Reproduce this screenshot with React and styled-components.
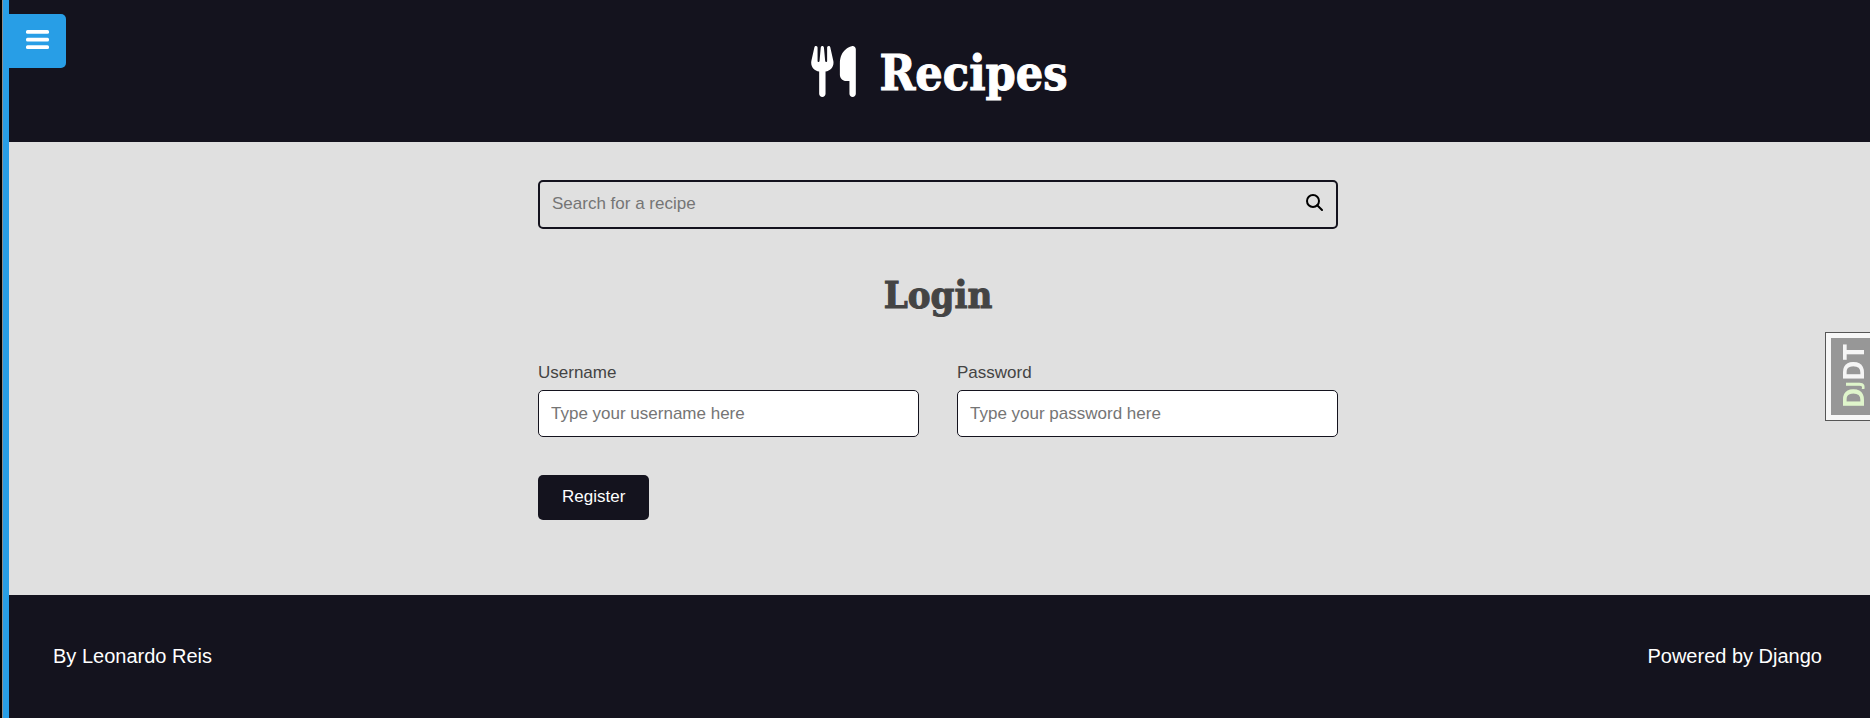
import React from "react";
import styled, { createGlobalStyle } from "styled-components";
import { FaUtensils } from "react-icons/fa6";

const ink = "#14131e";
const blue = "#289ee6";
const slab = '"Roboto Slab", "DejaVu Serif Condensed", "DejaVu Serif", serif';

const GlobalStyle = createGlobalStyle`
  *, *::before, *::after { box-sizing: border-box; }
  body {
    margin: 0;
    background: #e0e0e0;
    color: #444;
    font-family: "Liberation Sans", Arial, sans-serif;
    font-size: 17px;
  }
`;

const Page = styled.div`
  display: flex;
  flex-direction: column;
  min-height: 100vh;
  padding-left: 6px;
`;

const MenuRail = styled.aside`
  position: fixed;
  top: 0;
  bottom: 0;
  left: 0;
  z-index: 2;
  width: 9px;
  padding-top: 14px;
  background: ${blue};
  border-left: 2px solid #000;
  box-shadow: inset 1px 0 #8d8d8d;
`;

const MenuButton = styled.button`
  display: flex;
  align-items: center;
  justify-content: center;
  width: 63px;
  height: 54px;
  margin-left: 1px;
  padding: 0 0 3px 6px;
  border: 0;
  border-radius: 0 5px 5px 0;
  background: ${blue};
  color: #fff;
`;

const Header = styled.header`
  display: flex;
  justify-content: center;
  padding: 46px 20px 45px;
  background: ${ink};
`;

const Brand = styled.a`
  display: flex;
  align-items: center;
  gap: 20px;
  color: #fff;
  text-decoration: none;
  font-size: 51px;
`;

const BrandName = styled.h1`
  margin: 0;
  padding-top: 4px;
  font: bold 48px/47px ${slab};
  -webkit-text-stroke: 1px;
`;

const Main = styled.main`
  flex: 1;
  display: flex;
  flex-direction: column;
  gap: 38px;
  width: 100%;
  max-width: 840px;
  margin: 0 auto;
  padding: 38px 20px 75px;
`;

const SearchForm = styled.form`
  display: flex;
  height: 49px;
  border: 2px solid ${ink};
  border-radius: 5px;
`;

const SearchInput = styled.input`
  flex: 1;
  min-width: 0;
  padding: 0 12px 1px;
  border: 0;
  background: transparent;
  color: #444;
  font: inherit;
  &::placeholder { color: #757575; }
`;

const SearchButton = styled.button`
  display: flex;
  align-items: center;
  padding: 0 13px 4px;
  border: 0;
  background: transparent;
  color: #000;
`;

const Title = styled.h2`
  margin: 0;
  text-align: center;
  font: bold 38px/56px ${slab};
  -webkit-text-stroke: 1px;
`;

const LoginForm = styled.form`
  display: grid;
  grid-template-columns: repeat(auto-fit, minmax(260px, 1fr));
  gap: 38px;
`;

const Field = styled.div`
  display: flex;
  flex-direction: column;
  gap: 5px;
`;

const Label = styled.label`
  line-height: 24px;
`;

const TextInput = styled.input`
  width: 100%;
  height: 47px;
  padding: 0 12px;
  border: 1px solid ${ink};
  border-radius: 5px;
  background: #fff;
  color: #444;
  font: inherit;
  &::placeholder { color: #757575; }
`;

const SubmitButton = styled.button`
  grid-column: 1 / -1;
  justify-self: start;
  height: 45px;
  padding: 0 24px 2px;
  border: 0;
  border-radius: 5px;
  background: ${ink};
  color: #fff;
  font: inherit;
`;

const Footer = styled.footer`
  display: flex;
  justify-content: space-between;
  gap: 20px;
  padding: 50px 48px 50px 47px;
  background: ${ink};
  color: #fff;
  font-size: 20px;
  line-height: 23px;
`;

const FooterText = styled.p`
  margin: 0;
`;

const DebugHandle = styled.div`
  position: fixed;
  top: 332px;
  right: 0;
  z-index: 3;
  width: 45px;
  height: 89px;
  padding: 5px 0 5px 5px;
  border: 1px solid #565656;
  border-right: 0;
  background: #f7f7f7;
`;

const DebugButton = styled.button`
  display: flex;
  align-items: center;
  justify-content: center;
  width: 39px;
  height: 77px;
  padding: 0 0 0 5px;
  border: 0;
  background: #979797;
`;

const DebugText = styled.span`
  writing-mode: vertical-rl;
  transform: rotate(180deg);
  color: #f5f5f5;
  font: bold 28px/34px "Open Sans", sans-serif;
`;

const DebugAccent = styled.span`
  color: #dff5cb;
`;

const DebugSmall = styled.small`
  font-size: 20px;
`;

function BarsIcon() {
  return (
    <svg width="23" height="19" viewBox="0 0 23 19" fill="currentColor" aria-hidden="true">
      <rect width="23" height="3.7" rx="1.5" />
      <rect y="7.7" width="23" height="3.7" rx="1.5" />
      <rect y="15.3" width="23" height="3.7" rx="1.5" />
    </svg>
  );
}

function SearchIcon() {
  return (
    <svg width="17" height="17" viewBox="0 0 17 17" fill="none" stroke="currentColor" strokeWidth="2" aria-hidden="true">
      <circle cx="7" cy="7" r="6" />
      <path d="M11.2 11.2L16 16" strokeLinecap="round" />
    </svg>
  );
}

export default function App() {
  return (
    <>
      <GlobalStyle />
      <MenuRail>
        <MenuButton type="button" aria-label="Open menu">
          <BarsIcon />
        </MenuButton>
      </MenuRail>
      <Page>
        <Header>
          <Brand href="#">
            <FaUtensils />
            <BrandName>Recipes</BrandName>
          </Brand>
        </Header>
        <Main>
          <SearchForm role="search">
            <SearchInput type="search" aria-label="Search for a recipe" placeholder="Search for a recipe" />
            <SearchButton type="submit" aria-label="Search">
              <SearchIcon />
            </SearchButton>
          </SearchForm>
          <Title>Login</Title>
          <LoginForm>
            <Field>
              <Label htmlFor="username">Username</Label>
              <TextInput id="username" type="text" placeholder="Type your username here" />
            </Field>
            <Field>
              <Label htmlFor="password">Password</Label>
              <TextInput id="password" type="password" placeholder="Type your password here" />
            </Field>
            <SubmitButton type="submit">Register</SubmitButton>
          </LoginForm>
        </Main>
        <Footer>
          <FooterText>By Leonardo Reis</FooterText>
          <FooterText>Powered by Django</FooterText>
        </Footer>
      </Page>
      <DebugHandle>
        <DebugButton type="button" aria-label="Show debug toolbar">
          <DebugText>
            <DebugAccent>D<DebugSmall>J</DebugSmall></DebugAccent>DT
          </DebugText>
        </DebugButton>
      </DebugHandle>
    </>
  );
}
